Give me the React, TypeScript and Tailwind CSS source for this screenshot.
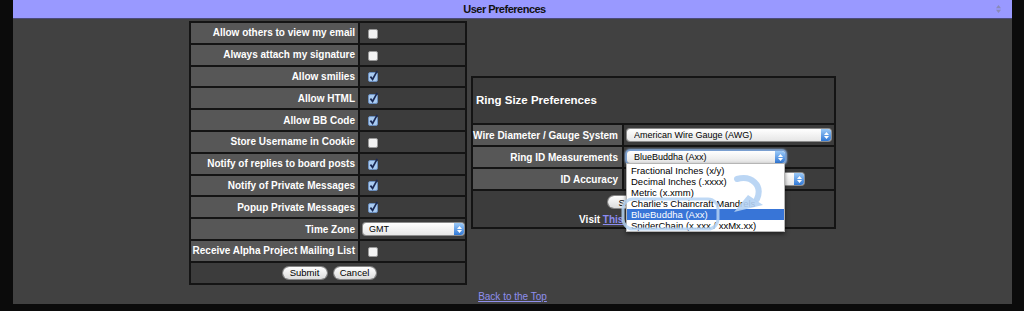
import React from 'react';

const rows: [string, boolean][] = [
  ['Allow others to view my email', false],
  ['Always attach my signature', false],
  ['Allow smilies', true],
  ['Allow HTML', true],
  ['Allow BB Code', true],
  ['Store Username in Cookie', false],
  ['Notify of replies to board posts', true],
  ['Notify of Private Messages', true],
  ['Popup Private Messages', true],
];

const ringOptions = [
  'Fractional Inches (x/y)',
  'Decimal Inches (.xxxx)',
  'Metric (x.xmm)',
  "Charlie's Chaincraft Mandrels",
  'BlueBuddha (Axx)',
  'SpiderChain (x.xxx / xxMx.xx)',
];

function Checkbox({ checked }: { checked: boolean }) {
  return (
    <svg width="11" height="12" viewBox="0 0 11 12" className="block">
      <rect x="0.5" y="2.5" width="9" height="9" rx="1.5" fill={checked ? '#a9cbf1' : '#f3f3f3'} stroke={checked ? '#6b8fbf' : '#9a9a9a'} />
      {checked && <path d="M2.4 6.6 L4.6 9.4 L9.2 0.8" stroke="#1b2a55" strokeWidth="1.7" fill="none" />}
    </svg>
  );
}

function Stepper() {
  return (
    <div className="flex h-full w-[10px] flex-col items-center justify-center gap-[1px] rounded-r-[3px] bg-gradient-to-b from-[#9ccaf7] to-[#2f78d6]">
      <svg width="5" height="3" viewBox="0 0 5 3"><path d="M0 3 L2.5 0 L5 3 Z" fill="#fff" /></svg>
      <svg width="5" height="3" viewBox="0 0 5 3"><path d="M0 0 L2.5 3 L5 0 Z" fill="#fff" /></svg>
    </div>
  );
}

function Select({ value, className, focused }: { value: string; className: string; focused?: boolean }) {
  return (
    <div
      className={
        'flex h-[12px] items-center overflow-hidden rounded-[3px] bg-gradient-to-b from-white to-[#e6e6e6] text-[9px] font-normal leading-none text-black ' +
        (focused ? 'shadow-[0_0_0_1px_#7a9fd0,0_0_2px_2px_#8fb6ea] ' : 'shadow-[0_0_0_1px_#8c8c8c] ') +
        className
      }
    >
      <span className="flex-1 truncate">{value}</span>
      <Stepper />
    </div>
  );
}

function MacButton({ label, className }: { label: string; className: string }) {
  return (
    <div className={'flex h-[12px] items-center justify-center rounded-full bg-gradient-to-b from-white to-[#dcdcdc] text-[9.5px] font-normal leading-none text-black shadow-[0_0_0_1px_#888] ' + className}>
      {label}
    </div>
  );
}

export default function App() {
  return (
    <div className="h-[311px] w-[1024px] bg-[#0b0b0b] font-['Liberation_Sans',Arial,sans-serif]">
      <div className="ml-[13px] flex h-[304px] w-[999px] flex-col bg-[#414141]">
        <div className="flex h-[19px] items-center border-b border-[#4b4b78] bg-[#9999ff]">
          <div className="flex-1 text-center text-[11px] font-bold tracking-[-0.5px] text-[#111]">User Preferences</div>
          <svg width="5" height="8" viewBox="0 0 5 8" className="mr-[11px]">
            <path d="M0 3.2 L2.5 0 L5 3.2 Z M0 4.8 L2.5 8 L5 4.8 Z" fill="#8a8ab8" />
          </svg>
        </div>

        <div className="mt-[2px] flex items-center justify-center gap-[4px]">
          {/* left preferences table */}
          <div className="grid w-[278px] grid-cols-[167px_1fr] gap-[2px] bg-[#141414] p-[2px] text-[10px] font-bold text-white">
            {rows.map(([label, checked]) => (
              <React.Fragment key={label}>
                <div className="flex h-[19.8px] items-center justify-end bg-[#575757] pr-[3px]">{label}</div>
                <div className="flex h-[19.8px] items-center bg-[#3c3c3c] pl-[8px]">
                  <Checkbox checked={checked} />
                </div>
              </React.Fragment>
            ))}
            <div className="flex h-[19.8px] items-center justify-end bg-[#575757] pr-[3px]">Time Zone</div>
            <div className="flex h-[19.8px] items-center bg-[#3c3c3c] pl-[3px]">
              <Select value="GMT" className="w-[101px] pl-[6px]" />
            </div>
            <div className="flex h-[19.8px] items-center justify-end bg-[#575757] pr-[3px]">Receive Alpha Project Mailing List</div>
            <div className="flex h-[19.8px] items-center bg-[#3c3c3c] pl-[8px]">
              <Checkbox checked={false} />
            </div>
            <div className="col-span-2 flex h-[19.8px] items-center justify-center gap-[7px] bg-[#3c3c3c] pl-[2px]">
              <MacButton label="Submit" className="w-[44px]" />
              <MacButton label="Cancel" className="w-[42px]" />
            </div>
          </div>

          {/* ring size table */}
          <div className="relative grid w-[365px] grid-cols-[149px_1fr] gap-[2px] bg-[#141414] p-[2px] text-[10px] font-bold text-white">
            <div className="col-span-2 flex h-[45px] items-center bg-[#3c3c3c] pl-[3px] text-[11.5px]">Ring Size Preferences</div>

            <div className="flex h-[20px] items-center justify-end bg-[#575757] pr-[4px]">Wire Diameter / Gauge System</div>
            <div className="flex h-[20px] items-center bg-[#3c3c3c] pl-[3px]">
              <Select value="American Wire Gauge (AWG)" className="w-[204px] pl-[7px]" />
            </div>

            <div className="flex h-[20px] items-center justify-end bg-[#575757] pr-[4px]">Ring ID Measurements</div>
            <div className="relative flex h-[20px] items-center bg-[#3c3c3c] pl-[3px]">
              <Select value="BlueBuddha (Axx)" className="w-[158px] pl-[7px]" focused />
              <div className="absolute left-[2px] top-[16px] z-10 w-[159px] border border-[#b5b5b5] bg-white pt-[1px] font-normal text-black shadow-[0_2px_4px_rgba(0,0,0,0.5)]">
                {ringOptions.map((o, i) => (
                  <div
                    key={o}
                    className={'flex h-[11px] items-center whitespace-nowrap pl-[4px] text-[9.5px] leading-none ' + (i === 4 ? 'bg-[#3875d7] text-white' : '')}
                  >
                    {o}
                  </div>
                ))}
              </div>
            </div>

            <div className="flex h-[20px] items-center justify-end bg-[#575757] pr-[4px]">ID Accuracy</div>
            <div className="flex h-[20px] items-center bg-[#3c3c3c] pl-[3px]">
              <Select value="" className="w-[177px] pl-[7px]" />
            </div>

            <div className="col-span-2 flex h-[36px] flex-col items-center bg-[#3c3c3c] pt-[5px]">
              <MacButton label="Submit Changes" className="w-[92px]" />
              <div className="mt-[4px]">
                Visit <span className="text-[#8c8cf0] underline">This</span> Page for more details
              </div>
            </div>

            {/* annotation arrow */}
            <svg width="160" height="65" viewBox="0 0 160 65" className="pointer-events-none absolute left-[140px] top-[95px] z-20">
              <rect x="12" y="28" width="95" height="30" rx="10" fill="none" stroke="#b4d2f3" strokeOpacity="0.85" strokeWidth="3" />
              <path d="M126 8 C140 4, 152 14, 146 28" fill="none" stroke="#b4d2f3" strokeOpacity="0.9" strokeWidth="6" strokeLinecap="round" />
              <path d="M123 41 L137 24 L152 34 Z" fill="#b4d2f3" fillOpacity="0.9" />
            </svg>
          </div>
        </div>

        <div className="mt-[4px] text-center text-[10px] text-[#8f8fee] underline">Back to the Top</div>
      </div>
    </div>
  );
}
